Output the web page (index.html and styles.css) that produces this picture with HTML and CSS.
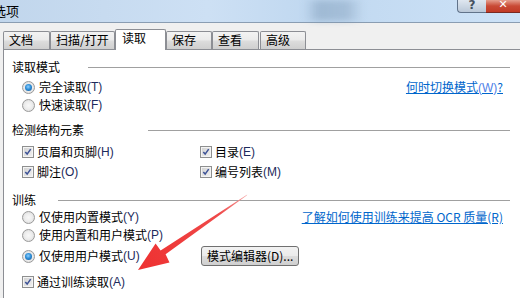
FILE: index.html
```html
<!DOCTYPE html>
<html lang="zh-CN">
<head>
<meta charset="utf-8">
<title>选项</title>
<link rel="stylesheet" href="styles.css">
</head>
<body>
<div class="window">
  <div class="titlebar">
    <span class="title">选项</span>
    <span class="blur"></span>
    <div class="caption-btns">
      <span class="btn-help">?</span>
      <span class="btn-close">✕</span>
    </div>
  </div>
  <div class="tabstrip">
    <span class="tab w46">文档</span>
    <span class="tab w64">扫描/打开</span>
    <span class="tab active">读取</span>
    <span class="tab w45">保存</span>
    <span class="tab w46">查看</span>
    <span class="tab w45 gap">高级</span>
  </div>
  <div class="panel">
    <div class="group-head gh1"><span class="label l1">读取模式</span><span class="rule"></span></div>
    <div class="row rr1 split">
      <span class="opt"><span class="radio on"></span>完全读取<span class="mn">(T)</span></span>
      <span class="link">何时切换模式<span class="lm">(W)</span>?</span>
    </div>
    <div class="row">
      <span class="opt"><span class="radio"></span>快速读取<span class="mn">(F)</span></span>
    </div>

    <div class="group-head gh2"><span class="label l2">检测结构元素</span><span class="rule"></span></div>
    <div class="checks">
      <div class="row cr1"><span class="opt"><span class="check"><svg viewBox="0 0 13 13"><path d="M3 6.5 L5.4 9.2 L10 2.8"/></svg></span>页眉和页脚<span class="mn">(H)</span></span></div>
      <div class="row cr1"><span class="opt"><span class="check"><svg viewBox="0 0 13 13"><path d="M3 6.5 L5.4 9.2 L10 2.8"/></svg></span>目录<span class="mn">(E)</span></span></div>
      <div class="row cr2"><span class="opt"><span class="check"><svg viewBox="0 0 13 13"><path d="M3 6.5 L5.4 9.2 L10 2.8"/></svg></span>脚注<span class="mn">(O)</span></span></div>
      <div class="row cr2"><span class="opt"><span class="check"><svg viewBox="0 0 13 13"><path d="M3 6.5 L5.4 9.2 L10 2.8"/></svg></span>编号列表<span class="mn">(M)</span></span></div>
    </div>

    <div class="group-head gh3"><span class="label l3">训练</span><span class="rule"></span></div>
    <div class="row split">
      <span class="opt"><span class="radio"></span>仅使用内置模式<span class="mn">(Y)</span></span>
      <span class="link">了解如何使用训练来提高 OCR 质量(R)</span>
    </div>
    <div class="row">
      <span class="opt"><span class="radio"></span>使用内置和用户模式<span class="mn">(P)</span></span>
    </div>
    <div class="row rr3">
      <span class="opt opt-wide"><span class="radio on"></span>仅使用用户模式<span class="mn">(U)</span></span>
      <span class="button">模式编辑器(D)...</span>
    </div>
    <div class="row cr3">
      <span class="opt"><span class="check"><svg viewBox="0 0 13 13"><path d="M3 6.5 L5.4 9.2 L10 2.8"/></svg></span>通过训练读取<span class="mn">(A)</span></span>
    </div>
  </div>

  <svg class="arrow" viewBox="0 0 520 298" width="520" height="298">
    <defs>
      <linearGradient id="ag" x1="247" y1="195" x2="138" y2="270" gradientUnits="userSpaceOnUse">
        <stop offset="0" stop-color="#f5a0a0"/>
        <stop offset="0.25" stop-color="#ef4a4a"/>
        <stop offset="1" stop-color="#ee3030"/>
      </linearGradient>
    </defs>
    <polygon fill="url(#ag)" points="247.3,194.6 246.7,195.4 165.6,254.3 169.5,262.5 138,270 155.6,243.6 160.6,250.6"/>
  </svg>
</div>
</body>
</html>
```

FILE: styles.css
```css
* { box-sizing: border-box; }

html, body {
  margin: 0;
  padding: 0;
  background: #f0f0f0;
}

body {
  width: 520px;
  height: 298px;
  overflow: hidden;
  font-family: "Liberation Sans", "Noto Sans CJK SC", sans-serif;
  font-size: 12px;
  color: #000;
}

.window {
  position: relative;
  width: 520px;
  height: 298px;
  display: flex;
  flex-direction: column;
}

/* title bar */
.titlebar {
  height: 23px;
  flex: none;
  display: flex;
  align-items: flex-start;
  background: linear-gradient(90deg, #c1d6ec 0%, #cde0f4 40%, #c0d8f0 60%, #cde2f7 100%);
  border-bottom: 1px solid #8a9db2;
}

.title {
  margin-left: -7px;
  line-height: 21px;
  font-size: 13px;
  font-family: "Noto Sans CJK SC", sans-serif;
  color: #000;
}

.blur {
  margin-left: 285px;
  width: 60px;
  height: 21px;
  background: linear-gradient(90deg, rgba(120,150,180,0) 0%, rgba(120,150,180,0.45) 25%, rgba(110,140,170,0.35) 70%, rgba(120,150,180,0) 100%);
  filter: blur(3px);
}

.caption-btns {
  margin-left: auto;
  display: flex;
}

.btn-help {
  width: 29px;
  height: 13px;
  border: 1px solid #61738a;
  border-top: none;
  border-right: none;
  border-bottom-left-radius: 4px;
  background: linear-gradient(#dfe7f0, #bac8d8);
  color: #44505e;
  font-size: 12px;
  font-weight: bold;
  line-height: 10px;
  text-align: center;
  font-family: "DejaVu Sans", sans-serif;
  overflow: hidden;
}

.btn-close {
  width: 34px;
  height: 13px;
  border-bottom: 1px solid #7a2a22;
  background: linear-gradient(#e59f8e, #c94a35 50%, #c13a26);
  color: #fff;
  font-size: 11px;
  font-weight: bold;
  line-height: 9px;
  text-align: center;
  font-family: "DejaVu Sans", sans-serif;
  overflow: hidden;
}

/* tabs */
.tabstrip {
  height: 26px;
  flex: none;
  display: flex;
  align-items: flex-end;
  padding-left: 3px;
  font-family: "Noto Sans CJK SC", sans-serif;
}

.tab {
  height: 18px;
  line-height: 16px;
  padding-left: 5px;
  border: 1px solid #8c8e94;
  border-bottom: none;
  border-radius: 2px 2px 0 0;
  background: linear-gradient(#f3f3f3 0%, #ebebeb 45%, #dcdcdc 55%, #cfcfcf 100%);
  white-space: nowrap;
}

.w46 { width: 47px; }
.w64 { width: 65px; }
.w45 { width: 46px; }
.gap { margin-left: 1px; }

.tab.active {
  width: 51px;
  height: 21px;
  margin-bottom: -1px;
  padding-left: 6px;
  line-height: 15px;
  background: #fff;
  position: relative;
  z-index: 2;
}

/* panel */
.panel {
  flex: 1;
  margin-left: 3px;
  background: #fff;
  border-top: 1px solid #8c8e94;
  border-left: 1px solid #8c8e94;
  padding: 8px 10px 0 8px;
  font-family: "Noto Sans CJK SC", sans-serif;
}

.group-head {
  display: flex;
  align-items: center;
  height: 18px;
}

.group-head .label {
  flex: none;
  line-height: 18px;
}

.l1 { width: 76px; }
.l2 { width: 136px; }
.l3 { width: 46px; }

.rule {
  flex: 1;
  height: 1px;
  background: #a0a0a0;
}

.gh2 { margin-top: 7px; }
.gh3 { margin-top: 11px; height: 16px; }

.row {
  display: flex;
  align-items: center;
  height: 18px;
  padding-left: 10px;
}

.split { justify-content: space-between; padding-right: 7px; }

.rr1 { margin-top: 2px; }
.rr3 { margin-top: 2px; height: 20px; }
.cr3 { margin-top: 7px; }

.opt {
  display: flex;
  align-items: center;
  white-space: nowrap;
  line-height: 18px;
}

.opt-wide { width: 175px; }

.mn {
  font-family: "Liberation Sans", sans-serif;
  color: #1c2a5c;
}

.radio {
  width: 13px;
  height: 13px;
  border-radius: 50%;
  border: 1px solid #9a9a9a;
  background: radial-gradient(circle at 50% 50%, #f8f8f8 0%, #eeeeee 45%, #d4d4d4 100%);
  margin-right: 4px;
  display: flex;
  align-items: center;
  justify-content: center;
  flex: none;
}

.radio.on::after {
  content: "";
  width: 7px;
  height: 7px;
  border-radius: 50%;
  background: radial-gradient(circle at 45% 40%, #8fd0ff 0%, #2f8fd8 45%, #10508f 100%);
}

.checks {
  display: grid;
  grid-template-columns: 178px auto;
  margin-top: 4px;
}

.checks .cr2 { margin-top: 2px; }

.check {
  width: 12px;
  height: 12px;
  border: 1px solid #8e8f8f;
  background: linear-gradient(135deg, #d0d0d0, #f2f2f2);
  box-shadow: inset 0 0 0 1px #f4f4f4;
  margin-right: 3px;
  flex: none;
  display: flex;
}

.check svg {
  width: 10px;
  height: 10px;
  fill: none;
  stroke: #3d5296;
  stroke-width: 2;
}

.link {
  color: #0066cc;
  text-decoration: underline;
  white-space: nowrap;
  line-height: 18px;
}

.lm { color: #4f7fe8; font-family: "Liberation Sans", sans-serif; }

.button {
  height: 20px;
  padding: 0 5px;
  border: 1px solid #707070;
  border-radius: 3px;
  background: linear-gradient(#f2f2f2 0%, #ebebeb 50%, #dddddd 50%, #cfcfcf 100%);
  line-height: 18px;
  white-space: nowrap;
  margin-left: 4px;
}

.arrow {
  position: absolute;
  left: 0;
  top: 0;
  pointer-events: none;
}
```
